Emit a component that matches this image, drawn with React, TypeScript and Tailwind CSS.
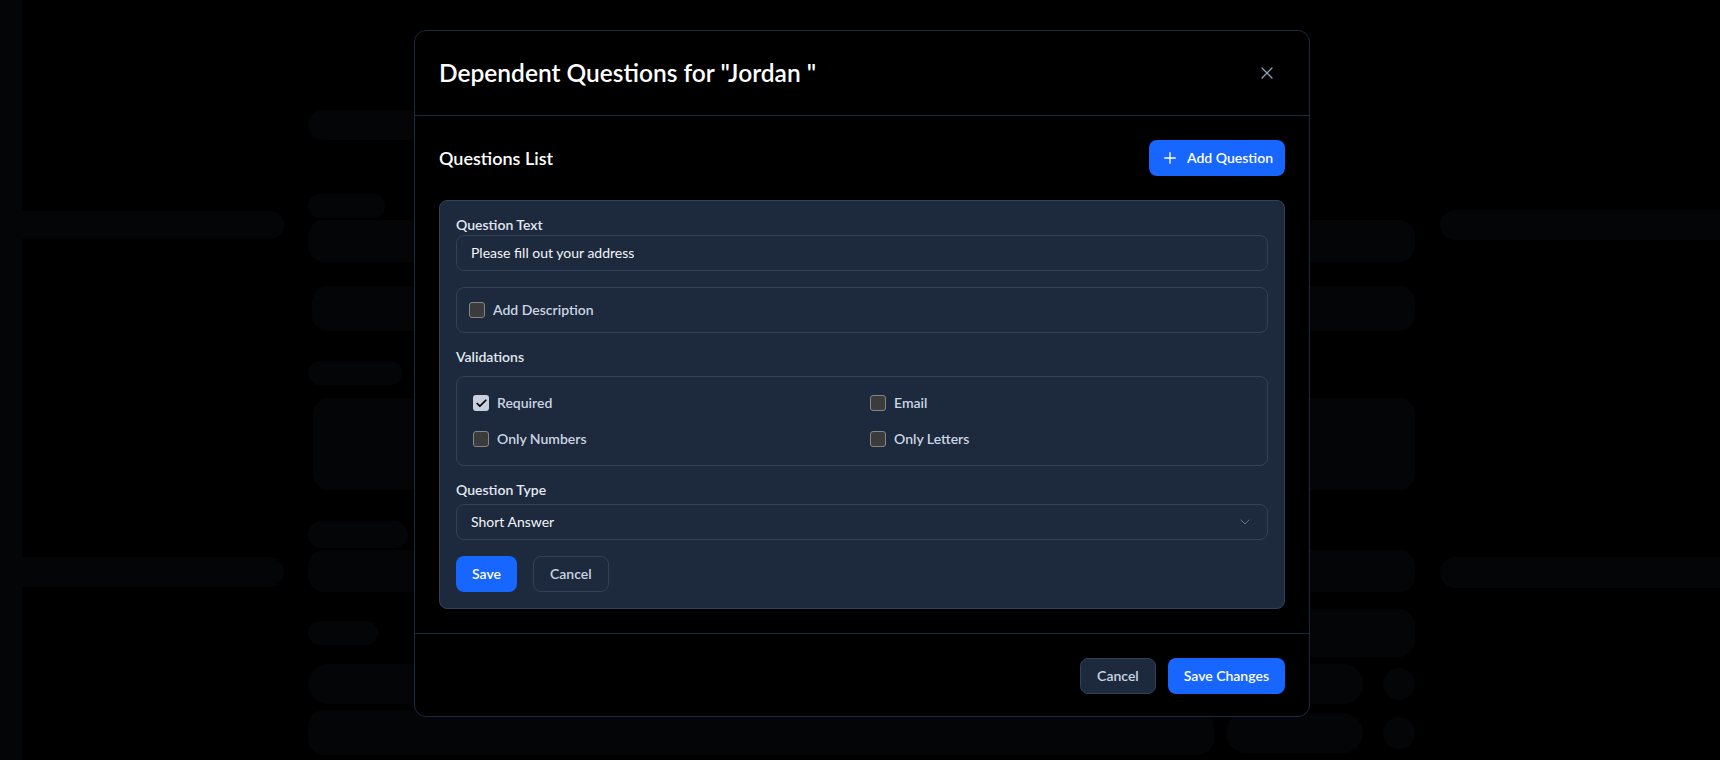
import { Check, ChevronDown, Plus, X } from 'lucide-react'

const font = { fontFamily: '"Segoe UI", Lato, "Noto Sans", sans-serif' }

function Box({ checked }: { checked?: boolean }) {
  if (checked) {
    return (
      <span className="flex h-4 w-4 shrink-0 items-center justify-center rounded-[3px] bg-[#c8d0e0]">
        <Check size={13} strokeWidth={3.25} className="text-black" />
      </span>
    )
  }
  return <span className="h-4 w-4 shrink-0 rounded-[3px] border border-[#858585] bg-[#3b3b3b]" />
}

function Option({ label, checked }: { label: string; checked?: boolean }) {
  return (
    <label className="flex items-center gap-2 text-sm leading-5 font-semibold text-slate-300">
      <Box checked={checked} />
      {label}
    </label>
  )
}

function Backdrop() {
  const blob = 'bg-[#040507]'
  return (
    <div className="flex h-[760px]">
      <div className={`w-[22px] shrink-0 ${blob}`} />
      <div className="w-[262px] shrink-0 pt-[211px]">
        <div className={`h-7 rounded-r-full ${blob}`} />
        <div className={`mt-[318px] h-[30px] rounded-r-full ${blob}`} />
      </div>
      <div className="ml-6 flex w-[1107px] shrink-0 flex-col pt-[110px]">
        <div className={`h-[30px] w-[400px] rounded-full ${blob}`} />
        <div className={`mt-[54px] h-6 w-[77px] rounded-full ${blob}`} />
        <div className={`mt-0.5 h-[42px] rounded-2xl ${blob}`} />
        <div className={`mt-6 ml-1 h-[45px] rounded-2xl ${blob}`} />
        <div className={`mt-[30px] h-6 w-[94px] rounded-full ${blob}`} />
        <div className={`mt-[13px] ml-[5px] h-[92px] rounded-2xl ${blob}`} />
        <div className={`mt-[31px] h-[27px] w-[100px] rounded-full ${blob}`} />
        <div className={`mt-0.5 h-[42px] rounded-2xl ${blob}`} />
        <div className="mt-[17px] flex h-12 items-center justify-between">
          <div className={`h-6 w-[70px] rounded-full ${blob}`} />
          <div className={`h-12 w-[135px] rounded-2xl ${blob}`} />
        </div>
        <div className="mt-[7px] flex h-10 items-center gap-5">
          <div className={`h-10 flex-1 rounded-full ${blob}`} />
          <div className={`h-8 w-8 rounded-full ${blob}`} />
        </div>
        <div className="mt-1.5 flex h-[45px] items-center gap-3">
          <div className={`h-[45px] flex-1 rounded-2xl ${blob}`} />
          <div className={`h-10 w-[137px] rounded-full ${blob}`} />
          <div className={`ml-2 h-8 w-8 rounded-full ${blob}`} />
        </div>
      </div>
      <div className="ml-[25px] flex-1 pt-[210px]">
        <div className={`h-[30px] rounded-l-full ${blob}`} />
        <div className={`mt-[317px] h-[31px] rounded-l-full ${blob}`} />
      </div>
    </div>
  )
}

export default function App() {
  return (
    <div className="relative h-[760px] w-full overflow-hidden bg-black" style={font}>
      <Backdrop />

      <div className="absolute inset-0 flex justify-center pl-1">
        <div className="mt-[30px] h-[687px] w-[896px] overflow-hidden rounded-xl border border-slate-800 bg-black">
          <div className="flex items-center justify-between border-b border-slate-800 py-6 pr-6 pl-6">
            <h1 className="text-[24.5px] leading-9 font-semibold text-white">Dependent Questions for "Jordan "</h1>
            <button className="flex h-9 w-9 items-center justify-center text-slate-400">
              <X size={20} strokeWidth={1.5} />
            </button>
          </div>

          <div className="space-y-6 p-6">
            <div className="flex items-center justify-between">
              <h2 className="text-lg font-semibold text-white">Questions List</h2>
              <button className="flex h-9 items-center gap-2 rounded-lg bg-[#1766ff] px-3 text-sm font-semibold text-white">
                <Plus size={18} strokeWidth={1.75} />
                Add Question
              </button>
            </div>

            <div className="rounded-lg border border-slate-700 bg-slate-800 p-4">
              <label className="mb-0.5 block text-sm leading-4 font-semibold text-slate-200">Question Text</label>
              <div className="flex h-9 items-center rounded-lg border border-slate-700 px-3.5 text-sm text-slate-100">
                Please fill out your address
              </div>

              <div className="mt-4 rounded-lg border border-slate-700 p-3">
                <Option label="Add Description" />
              </div>

              <label className="mt-4 mb-[11px] block text-sm leading-4 font-semibold text-slate-200">Validations</label>
              <div className="grid grid-cols-2 gap-4 rounded-lg border border-slate-700 p-4">
                <Option label="Required" checked />
                <Option label="Email" />
                <Option label="Only Numbers" />
                <Option label="Only Letters" />
              </div>

              <label className="mt-4 mb-1.5 block text-sm leading-4 font-semibold text-slate-200">Question Type</label>
              <div className="flex h-9 items-center justify-between rounded-lg border border-slate-700 px-3.5 text-sm text-slate-100">
                Short Answer
                <ChevronDown size={16} strokeWidth={1.5} className="text-slate-500" />
              </div>

              <div className="mt-4 flex gap-4">
                <button className="h-9 rounded-lg bg-[#1766ff] px-4 text-sm font-semibold text-white">Save</button>
                <button className="h-9 rounded-lg border border-slate-700 px-4 text-sm font-semibold text-slate-300">
                  Cancel
                </button>
              </div>
            </div>
          </div>

          <div className="flex justify-end gap-3 border-t border-slate-800 p-6">
            <button className="h-9 rounded-lg border border-slate-700 bg-slate-800 px-4 text-sm font-semibold text-slate-300">
              Cancel
            </button>
            <button className="h-9 rounded-lg bg-[#1766ff] px-4 text-sm font-semibold text-white">Save Changes</button>
          </div>
        </div>
      </div>
    </div>
  )
}
